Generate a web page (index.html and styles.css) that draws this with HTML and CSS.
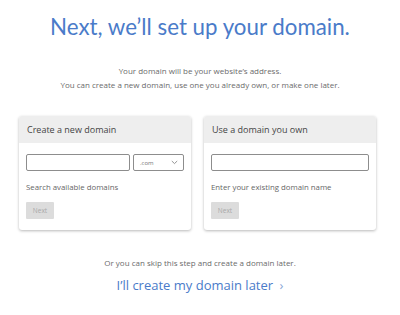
FILE: index.html
```html
<!DOCTYPE html>
<html lang="en">
<head>
    <meta charset="UTF-8">
    <title>Set up your domain</title>
    <link rel="stylesheet" href="styles.css">
</head>
<body>
    <div class="page">
        <h1 class="title">Next, we’ll set up your domain.</h1>
        <p class="intro">
            Your domain will be your website’s address.<br>
            You can create a new domain, use one you already own, or make one later.
        </p>

        <div class="cards">
            <div class="card">
                <div class="card-head">Create a new domain</div>
                <div class="card-body">
                    <div class="field-row">
                        <input class="text-input" type="text">
                        <div class="tld-select">
                            <span>.com</span>
                            <svg width="7" height="5" viewBox="0 0 7 5"><path d="M0.8 1 L3.5 3.6 L6.2 1" fill="none" stroke="#888" stroke-width="0.9"/></svg>
                        </div>
                    </div>
                    <div class="hint">Search available domains</div>
                    <button class="next-btn" disabled>Next</button>
                </div>
            </div>

            <div class="card">
                <div class="card-head">Use a domain you own</div>
                <div class="card-body">
                    <div class="field-row">
                        <input class="text-input" type="text">
                    </div>
                    <div class="hint">Enter your existing domain name</div>
                    <button class="next-btn" disabled>Next</button>
                </div>
            </div>
        </div>

        <p class="skip">Or you can skip this step and create a domain later.</p>
        <a class="later-link" href="#">I’ll create my domain later <span class="chev">›</span></a>
    </div>
</body>
</html>
```

FILE: styles.css
```css
body {
    margin: 0;
    font-family: "Open Sans", "Liberation Sans", sans-serif;
    background: #fff;
    color: #555;
}
.page {
    display: flex;
    flex-direction: column;
    align-items: center;
    padding-top: 13px;
}
.title {
    margin: 0;
    font-family: "Lato", "Open Sans", sans-serif;
    font-weight: 400;
    font-size: 22.3px;
    line-height: 28px;
    color: #4a7bc9;
}
.intro {
    margin: 23px 0 0;
    font-size: 8px;
    line-height: 14px;
    text-align: center;
    color: #6b6b6b;
}
.cards {
    display: flex;
    gap: 13px;
    margin-top: 24px;
    margin-right: 5px;
}
.card {
    width: 172px;
    border-radius: 3px;
    box-shadow: 0 1px 3px rgba(0, 0, 0, 0.28);
    overflow: hidden;
}
.card-head {
    height: 27px;
    line-height: 27px;
    padding: 0 8px;
    background: #eeeeee;
    font-size: 9px;
    color: #444;
}
.card-body {
    padding: 11px 7px 11px;
}
.field-row {
    display: flex;
    gap: 3px;
}
.text-input {
    box-sizing: border-box;
    flex: 1;
    min-width: 0;
    height: 17px;
    margin: 0;
    border: 1px solid #8d8d8d;
    border-radius: 2px;
}
.tld-select {
    box-sizing: border-box;
    width: 51px;
    height: 17px;
    display: flex;
    align-items: center;
    justify-content: space-between;
    padding: 0 5px 0 6px;
    border: 1px solid #8d8d8d;
    border-radius: 2px;
    font-size: 6px;
    color: #777;
}
.hint {
    margin-top: 10px;
    font-size: 7.8px;
    line-height: 12px;
    color: #666;
}
.next-btn {
    display: block;
    margin-top: 9px;
    width: 28px;
    height: 17px;
    padding: 0;
    border: none;
    border-radius: 1px;
    background: #dcdcdc;
    color: #a8a8a8;
    font-family: inherit;
    font-size: 6.5px;
}
.skip {
    margin: 27px 0 0;
    font-size: 8px;
    line-height: 12px;
    color: #6b6b6b;
}
.later-link {
    margin-top: 8px;
    font-size: 13px;
    line-height: 16px;
    color: #4a7bc9;
    text-decoration: none;
}
.chev {
    margin-left: 3px;
    color: #8aa6d6;
}
```
